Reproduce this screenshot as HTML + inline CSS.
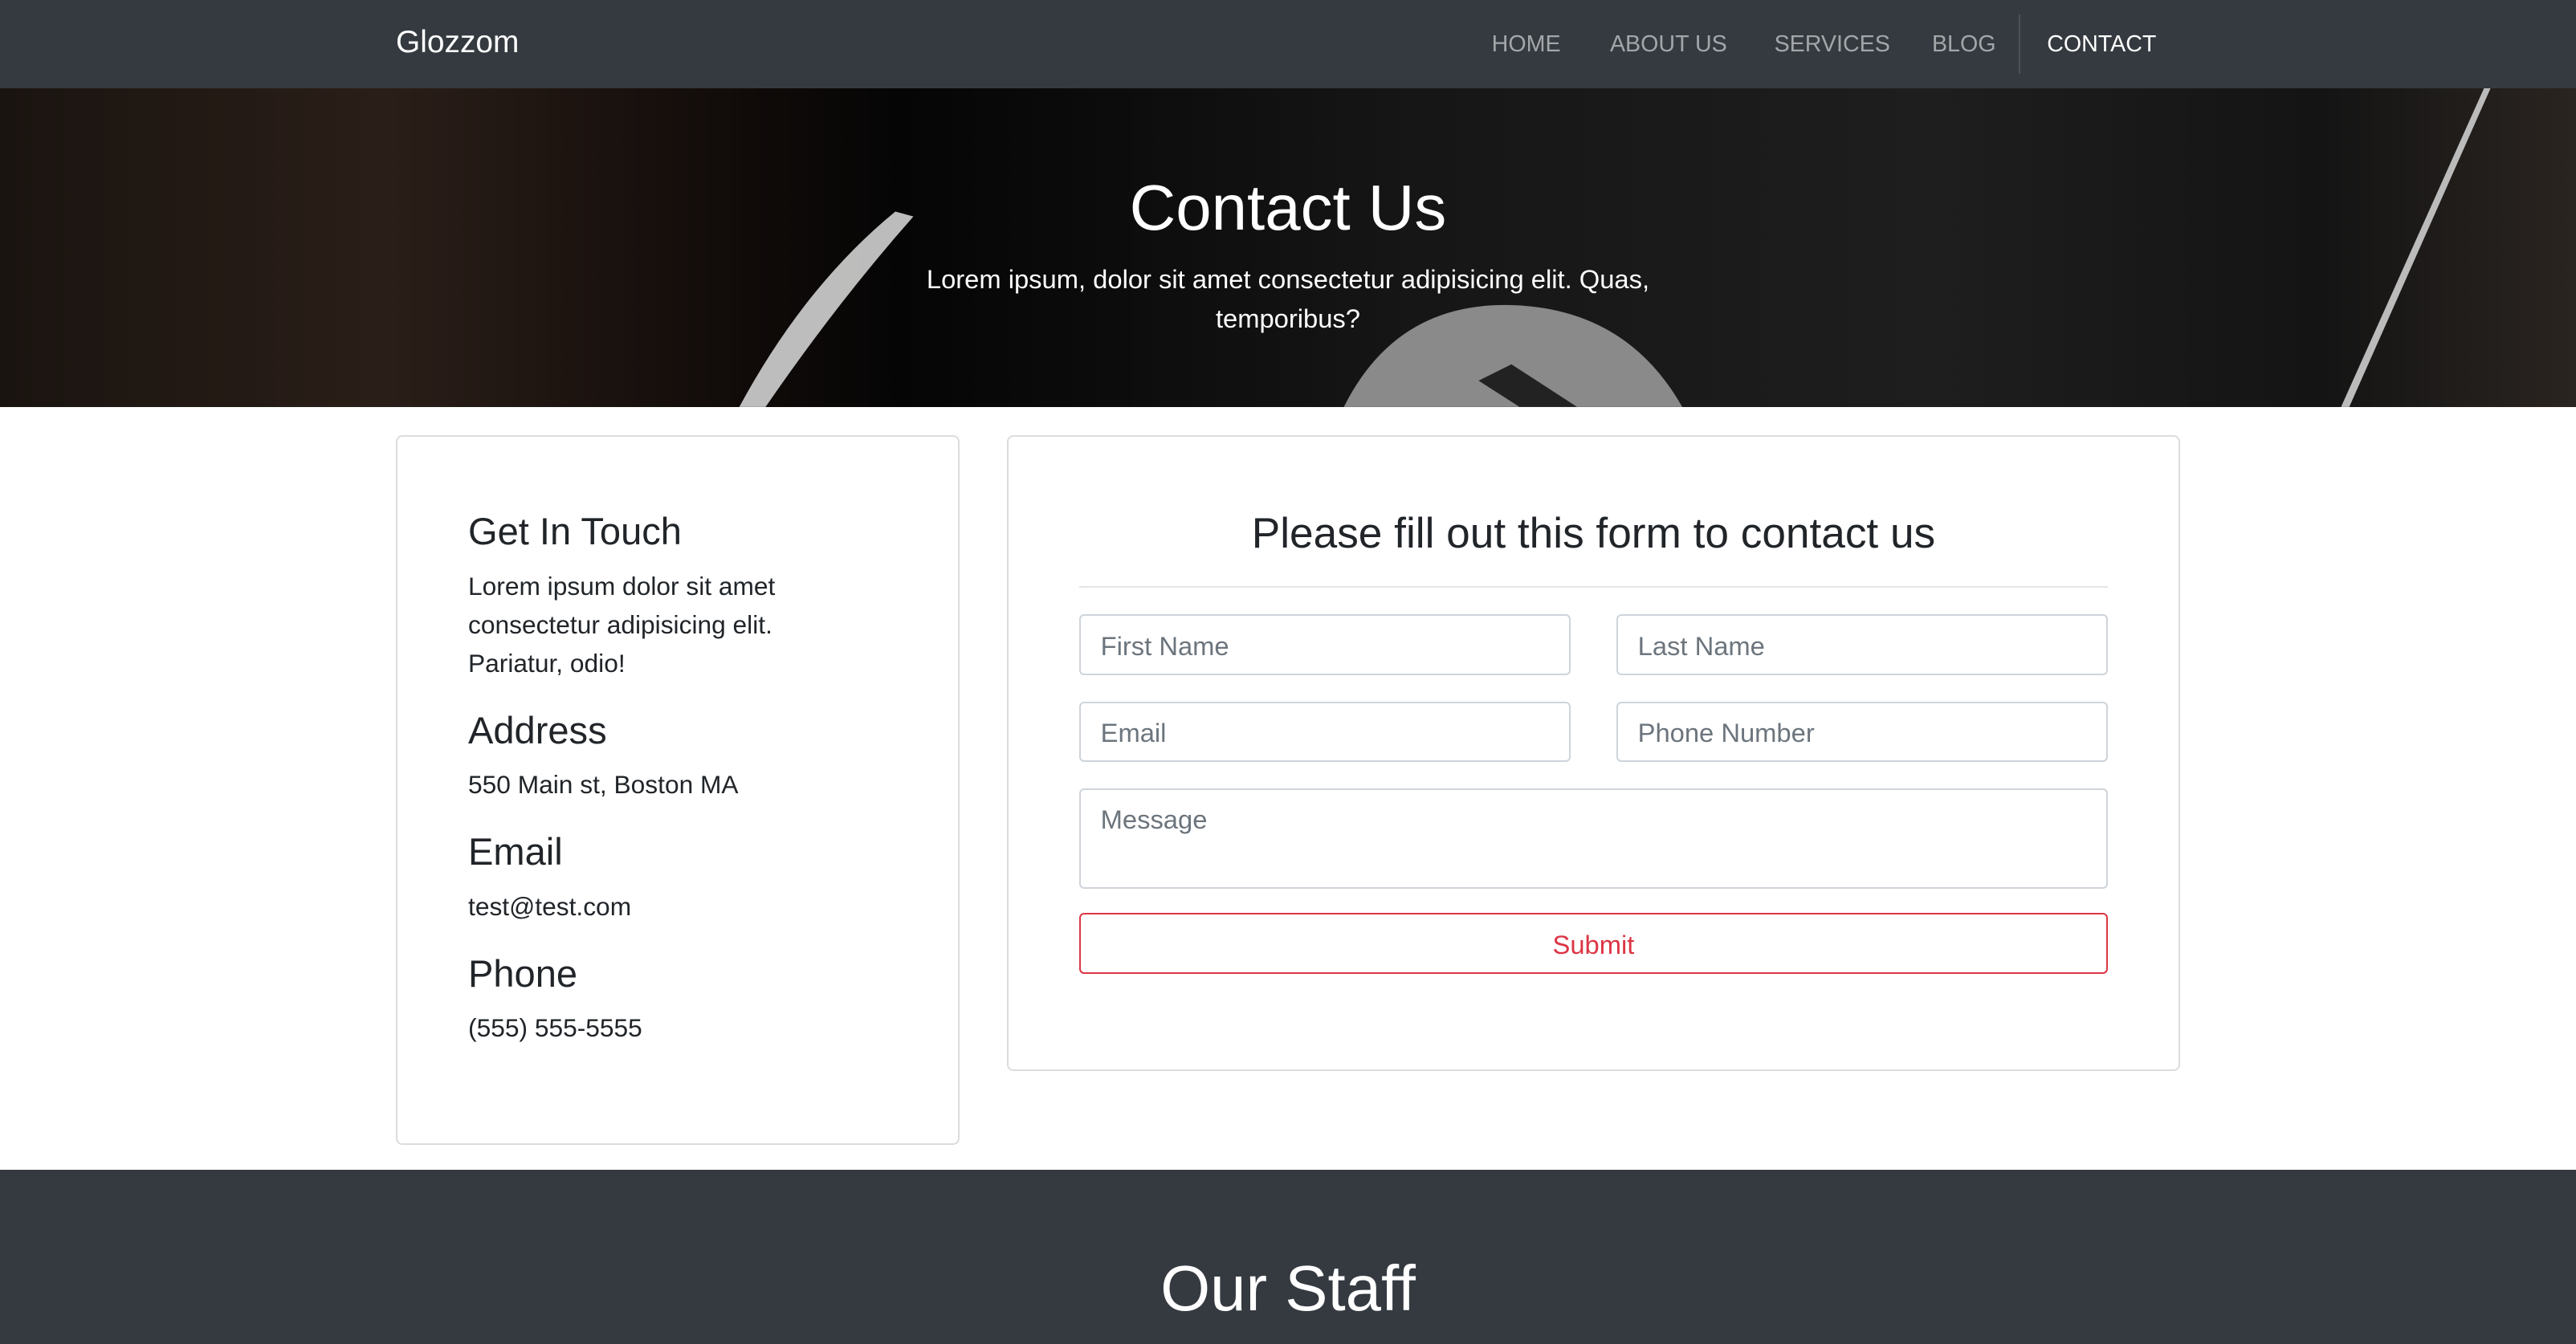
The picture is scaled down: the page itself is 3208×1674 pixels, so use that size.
<!DOCTYPE html>
<html><head><meta charset="utf-8">
<style>
html{zoom:2.0459;}
*{box-sizing:border-box;margin:0;padding:0;}
body{width:1568px;height:818px;overflow:hidden;font-family:"Liberation Sans",sans-serif;color:#212529;background:#fff;position:relative;}
.nav{position:absolute;left:0;top:0;width:1568px;height:54px;background:#343a40;}
.brand{position:absolute;left:241px;top:15px;font-size:19px;color:#fff;}
.nav a{position:absolute;top:19px;font-size:14px;color:rgba(255,255,255,.55);text-decoration:none;}
.sep{position:absolute;left:1229px;top:9px;width:1px;height:36px;background:#4b5259;}
.hero{position:absolute;left:0;top:54px;width:1568px;height:194px;background:linear-gradient(90deg,#1a1410 0%,#2a1e18 15%,#120c0a 28%,#050505 35%,#161616 55%,#1e1e1e 75%,#141414 90%,#2a2420 100%);overflow:hidden;}
.hero h1{position:absolute;left:0;width:1568px;top:50px;text-align:center;color:#fff;font-weight:500;font-size:39px;}
.hero p{position:absolute;left:554px;width:460px;top:104px;text-align:center;color:#fff;font-size:16px;line-height:24px;}
.card{position:absolute;border:1px solid #dcdcdc;border-radius:4px;background:#fff;}
h3{font-weight:500;font-size:23px;position:absolute;left:43px;}
.card p{position:absolute;left:43px;font-size:15.5px;line-height:23.5px;}
.in{position:absolute;border:1px solid #ced4da;border-radius:3px;height:37px;font-size:16px;color:#6c757d;padding:9px 12px;}
.foot{position:absolute;left:0;top:712px;width:1568px;height:106px;background:#343a40;}
.foot h2{position:absolute;left:0;width:1568px;text-align:center;top:50px;color:#fff;font-size:39px;font-weight:500;}
</style></head><body>
<div class="nav">
<div class="brand">Glozzom</div>
<a style="left:908px">HOME</a><a style="left:980px">ABOUT US</a><a style="left:1080px">SERVICES</a><a style="left:1176px">BLOG</a>
<div class="sep"></div>
<a style="left:1246px;color:#fff">CONTACT</a>
</div>
<div class="hero">
<svg width="1568" height="194" style="position:absolute;left:0;top:0">
<path d="M450 194 Q490 120 545 75 L556 78 Q510 130 466 194Z" fill="#ddd" opacity=".85"/>
<path d="M818 194 Q850 130 920 132 Q990 134 1024 194Z" fill="#8a8a8a"/>
<path d="M900 178 L920 168 L960 194 L925 194Z" fill="#222"/>
<path d="M1425 194 L1512 0 L1516 0 L1430 194Z" fill="#bbb"/>
</svg>
<h1>Contact Us</h1>
<p>Lorem ipsum, dolor sit amet consectetur adipisicing elit. Quas, temporibus?</p>
</div>
<div class="card" style="left:241px;top:265px;width:343px;height:432px;">
<h3 style="top:44px">Get In Touch</h3>
<p style="top:79px;width:215px">Lorem ipsum dolor sit amet consectetur adipisicing elit. Pariatur, odio!</p>
<h3 style="top:165px">Address</h3>
<p style="top:200px">550 Main st, Boston MA</p>
<h3 style="top:239px">Email</h3>
<p style="top:274px">test@test.com</p>
<h3 style="top:313px">Phone</h3>
<p style="top:348px">(555) 555-5555</p>
</div>
<div class="card" style="left:613px;top:265px;width:714px;height:387px;">
<div style="position:absolute;left:0;width:712px;top:44px;text-align:center;font-size:26px;font-weight:500;">Please fill out this form to contact us</div>
<div style="position:absolute;left:43px;top:91px;width:626px;height:1px;background:#e5e5e5"></div>
<div class="in" style="left:43px;top:108px;width:299px">First Name</div>
<div class="in" style="left:370px;top:108px;width:299px">Last Name</div>
<div class="in" style="left:43px;top:161px;width:299px">Email</div>
<div class="in" style="left:370px;top:161px;width:299px">Phone Number</div>
<div class="in" style="left:43px;top:214px;width:626px;height:61px;padding-top:9px">Message</div>
<div class="in" style="left:43px;top:290px;width:626px;border-color:#dc3545;color:#dc3545;text-align:center">Submit</div>
</div>
<div class="foot"><h2>Our Staff</h2></div>
</body></html>
